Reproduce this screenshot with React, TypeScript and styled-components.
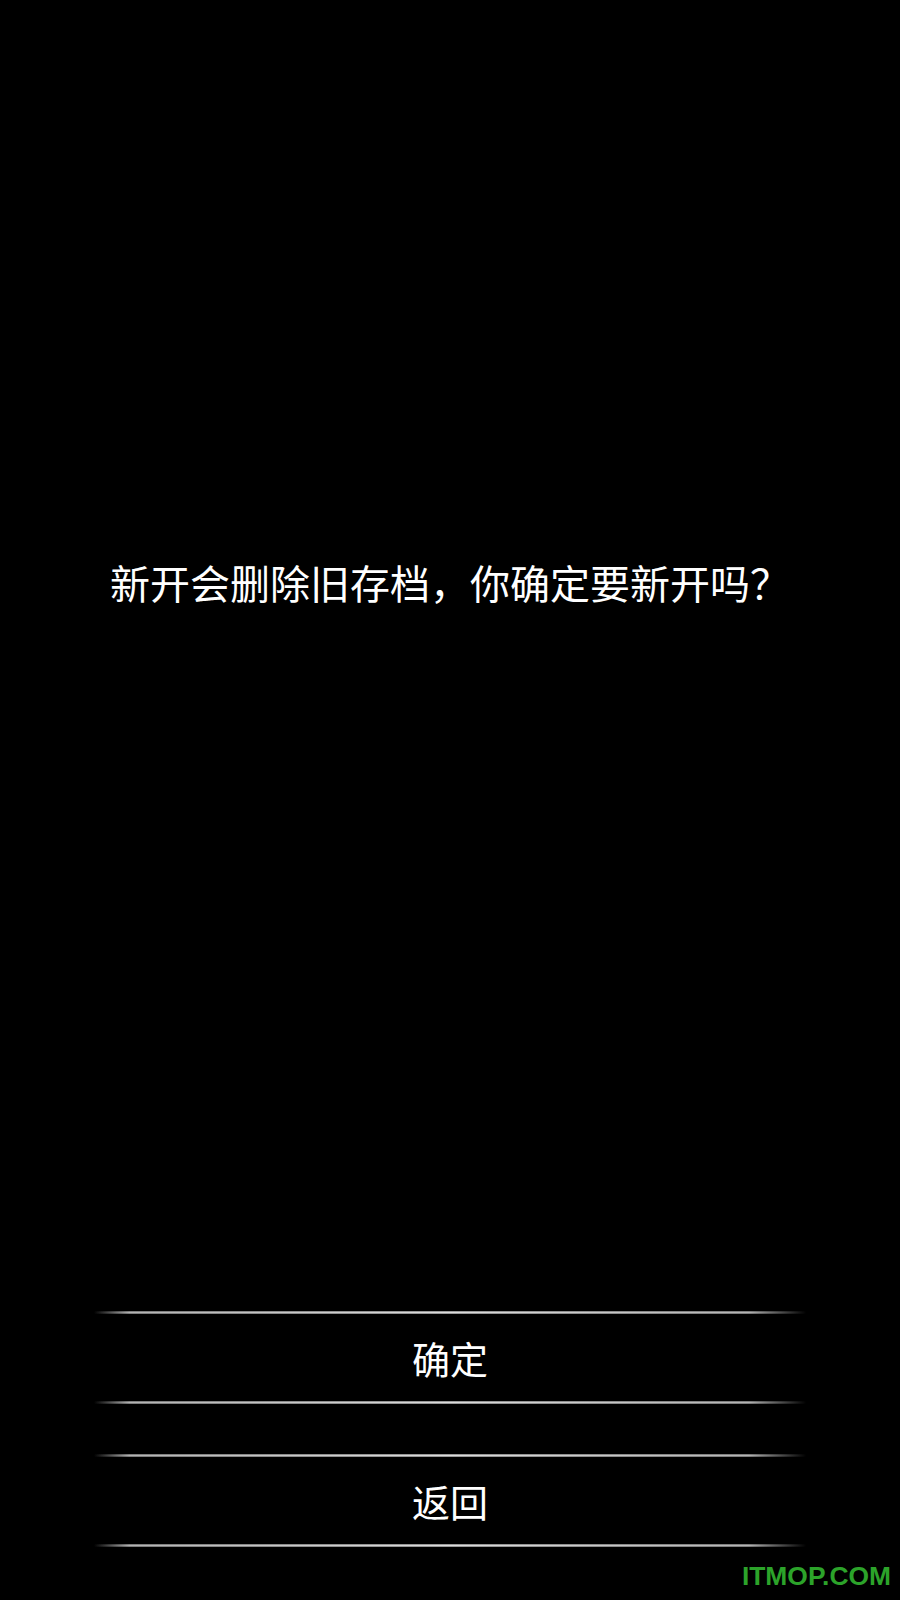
import React from "react";
import styled, { createGlobalStyle } from "styled-components";

const GlobalStyle = createGlobalStyle`
  html, body {
    margin: 0;
    padding: 0;
    background: #000;
  }
  body {
    font-family: "Noto Sans CJK SC", "Noto Sans", sans-serif;
  }
`;

const Page = styled.div`
  position: relative;
  width: 900px;
  height: 1600px;
  background: #000;
  display: flex;
  flex-direction: column;
  align-items: center;
  overflow: hidden;
`;

const Message = styled.p`
  margin: 558px 0 0;
  color: #fff;
  font-size: 40px;
  line-height: 48px;
  text-align: center;
  white-space: nowrap;
`;

const ButtonList = styled.div`
  margin-top: 705px;
  display: flex;
  flex-direction: column;
  gap: 50px;
  width: 712px;
`;

const line = `
  content: "";
  position: absolute;
  left: 0;
  right: 0;
  height: 3px;
  background: linear-gradient(
    to right,
    rgba(210, 210, 210, 0) 0%,
    rgba(210, 210, 210, 0.85) 5%,
    rgba(220, 220, 220, 1) 50%,
    rgba(210, 210, 210, 0.85) 92%,
    rgba(210, 210, 210, 0) 100%
  );
  -webkit-mask-image: linear-gradient(to bottom, rgba(0,0,0,0.55), #000 50%, rgba(0,0,0,0.55));
  mask-image: linear-gradient(to bottom, rgba(0,0,0,0.55), #000 50%, rgba(0,0,0,0.55));
`;

const MenuButton = styled.button`
  position: relative;
  height: 93px;
  width: 100%;
  border: none;
  background: transparent;
  color: #fff;
  font-family: "Noto Sans CJK SC", "Noto Sans", sans-serif;
  font-size: 38px;
  line-height: 93px;
  padding: 0;
  cursor: pointer;

  &::before {
    ${line}
    top: 0;
  }
  &::after {
    ${line}
    bottom: 0;
  }
`;

const Watermark = styled.div`
  position: absolute;
  right: 9px;
  bottom: 8px;
  color: #2ca32a;
  font-family: "Liberation Sans", Arial, sans-serif;
  font-weight: bold;
  font-size: 26.4px;
  letter-spacing: 0;
`;

export default function App() {
  return (
    <>
      <GlobalStyle />
      <Page>
        <Message>新开会删除旧存档，你确定要新开吗？</Message>
        <ButtonList>
          <MenuButton>确定</MenuButton>
          <MenuButton>返回</MenuButton>
        </ButtonList>
        <Watermark>ITMOP.COM</Watermark>
      </Page>
    </>
  );
}
